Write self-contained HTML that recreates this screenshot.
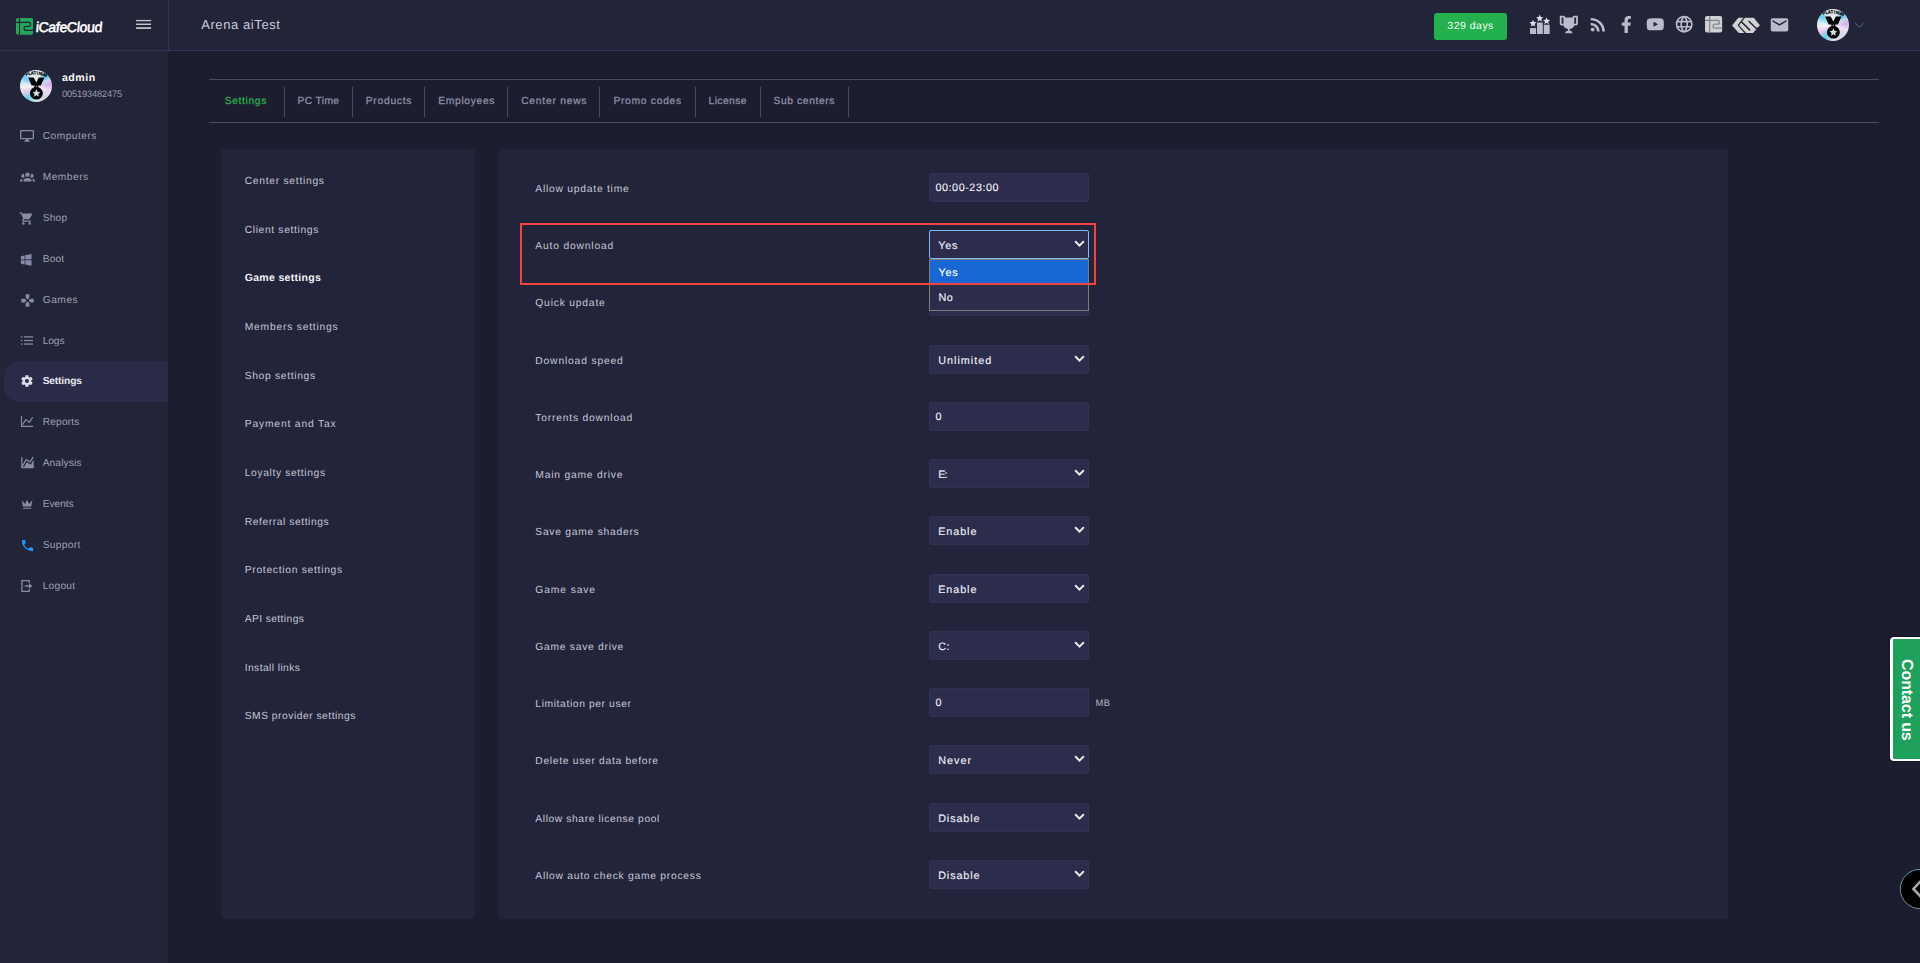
<!DOCTYPE html>
<html lang="en"><head><meta charset="utf-8"><title>iCafeCloud - Game settings</title>
<style>
*{box-sizing:border-box;margin:0;padding:0}
html,body{width:1920px;height:963px;overflow:hidden;background:#1c1d2f;font-family:"Liberation Sans",sans-serif}
.a{position:absolute;display:block}
.t{position:absolute;white-space:pre;display:block;text-rendering:geometricPrecision}
.inp{position:absolute;left:929px;width:160px;height:28.7px;background:#2c2d4c;border:1px solid #303253;border-radius:2px}
.chev{position:absolute;left:1074.4px;width:11px;height:8px}
.av{position:absolute;width:32.4px;height:32.4px;border-radius:50%;background:radial-gradient(circle at 50% 50%,rgba(255,255,255,.55) 0,rgba(255,255,255,0) 55%),conic-gradient(from 0deg,#e2e6ee 0deg,#dde4ec 22deg,#4fc9ef 47deg,#c9d6ea 64deg,#d3b0f0 84deg,#f1dcef 108deg,#d6dae6 135deg,#dbe0e8 178deg,#62d4ee 214deg,#e6c6ee 240deg,#f7eef2 264deg,#cfe6f0 284deg,#62cdee 306deg,#dde6ee 332deg,#e2e6ee 360deg)}
</style></head>
<body>
<div class="a" style="left:0px;top:0px;width:1920px;height:51px;background:#222437;border-bottom:1px solid #33355a"></div>
<div class="a" style="left:0px;top:51px;width:168px;height:912px;background:#222437;"></div>
<div class="a" style="left:168px;top:0px;width:1px;height:50px;background:#33355a;"></div>
<div class="a" style="left:4px;top:361px;width:164px;height:41.2px;background:#2a2c47;border-radius:15.5px 0 0 15.5px"></div>
<div class="a" style="left:209px;top:79px;width:1670px;height:1px;background:#4a4c62;"></div>
<div class="a" style="left:209px;top:122px;width:1670px;height:1px;background:#4a4c62;"></div>
<div class="a" style="left:284px;top:87px;width:1px;height:30px;background:#4a4c62;"></div>
<div class="a" style="left:352px;top:87px;width:1px;height:30px;background:#4a4c62;"></div>
<div class="a" style="left:424.4px;top:87px;width:1px;height:30px;background:#4a4c62;"></div>
<div class="a" style="left:507px;top:87px;width:1px;height:30px;background:#4a4c62;"></div>
<div class="a" style="left:599px;top:87px;width:1px;height:30px;background:#4a4c62;"></div>
<div class="a" style="left:695px;top:87px;width:1px;height:30px;background:#4a4c62;"></div>
<div class="a" style="left:760px;top:87px;width:1px;height:30px;background:#4a4c62;"></div>
<div class="a" style="left:848px;top:87px;width:1px;height:30px;background:#4a4c62;"></div>
<div class="a" style="left:221px;top:149px;width:254px;height:769.75px;background:#222439;border-radius:4px"></div>
<div class="a" style="left:499px;top:149px;width:1229px;height:769.75px;background:#222439;border-radius:4px 4px 0 0"></div>
<div class="inp" style="top:173px"></div>
<div class="inp" style="top:230px"></div>
<div class="inp" style="top:287px"></div>
<div class="inp" style="top:345px"></div>
<div class="inp" style="top:402px"></div>
<div class="inp" style="top:459px"></div>
<div class="inp" style="top:516px"></div>
<div class="inp" style="top:574px"></div>
<div class="inp" style="top:631px"></div>
<div class="inp" style="top:688px"></div>
<div class="inp" style="top:745px"></div>
<div class="inp" style="top:803px"></div>
<div class="inp" style="top:860px"></div>
<svg class="chev" style="top:240.40px" viewBox="0 0 11 8"><path d="M1.7 1.8L5.5 5.6L9.3 1.8" fill="none" stroke="#ececf0" stroke-width="2" stroke-linecap="round"/></svg>
<svg class="chev" style="top:297.40px" viewBox="0 0 11 8"><path d="M1.7 1.8L5.5 5.6L9.3 1.8" fill="none" stroke="#ececf0" stroke-width="2" stroke-linecap="round"/></svg>
<svg class="chev" style="top:355.40px" viewBox="0 0 11 8"><path d="M1.7 1.8L5.5 5.6L9.3 1.8" fill="none" stroke="#ececf0" stroke-width="2" stroke-linecap="round"/></svg>
<svg class="chev" style="top:469.40px" viewBox="0 0 11 8"><path d="M1.7 1.8L5.5 5.6L9.3 1.8" fill="none" stroke="#ececf0" stroke-width="2" stroke-linecap="round"/></svg>
<svg class="chev" style="top:526.40px" viewBox="0 0 11 8"><path d="M1.7 1.8L5.5 5.6L9.3 1.8" fill="none" stroke="#ececf0" stroke-width="2" stroke-linecap="round"/></svg>
<svg class="chev" style="top:584.40px" viewBox="0 0 11 8"><path d="M1.7 1.8L5.5 5.6L9.3 1.8" fill="none" stroke="#ececf0" stroke-width="2" stroke-linecap="round"/></svg>
<svg class="chev" style="top:641.40px" viewBox="0 0 11 8"><path d="M1.7 1.8L5.5 5.6L9.3 1.8" fill="none" stroke="#ececf0" stroke-width="2" stroke-linecap="round"/></svg>
<svg class="chev" style="top:755.40px" viewBox="0 0 11 8"><path d="M1.7 1.8L5.5 5.6L9.3 1.8" fill="none" stroke="#ececf0" stroke-width="2" stroke-linecap="round"/></svg>
<svg class="chev" style="top:813.40px" viewBox="0 0 11 8"><path d="M1.7 1.8L5.5 5.6L9.3 1.8" fill="none" stroke="#ececf0" stroke-width="2" stroke-linecap="round"/></svg>
<svg class="chev" style="top:870.40px" viewBox="0 0 11 8"><path d="M1.7 1.8L5.5 5.6L9.3 1.8" fill="none" stroke="#ececf0" stroke-width="2" stroke-linecap="round"/></svg>
<div class="a" style="left:929px;top:230.2px;width:160px;height:28.5px;border:1.3px solid #82b7fc;border-radius:2px"></div>
<div class="a" style="left:929px;top:259px;width:160px;height:51.5px;background:#2b2d4b;border:1px solid #7d7d78"></div>
<div class="a" style="left:930px;top:260px;width:158px;height:25px;background:#1967d4;"></div>
<div class="a" style="left:520px;top:223px;width:576.3px;height:62.2px;border:2.1px solid #f4433f"></div>
<svg class="a" style="left:16px;top:18.1px" width="17.2" height="16.8" viewBox="0 0 17.15 16.5" preserveAspectRatio="none"><rect x="0" y="0" width="17.15" height="16.5" rx="2" fill="#21a859"/><path d="M3.5 0V16.5" stroke="#222437" stroke-width="1.15" fill="none"/><path d="M0 4.3H12.6a1.95 1.95 0 0 1 0 3.9H10a2 2 0 0 0 0 4H17.15" stroke="#222437" stroke-width="1.15" fill="none"/></svg>
<svg class="a" style="left:136px;top:19px" width="16" height="11" viewBox="0 0 16 11"><g fill="#c6c6cc"><rect x="0.1" y="0.9" width="15" height="1.35"/><rect x="0.1" y="4.55" width="15" height="1.45"/><rect x="0.1" y="8.2" width="15" height="1.75"/></g></svg>
<div class="a" style="left:1434px;top:13px;width:73px;height:27px;background:#22b14c;border-radius:3px"></div>
<svg class="a" style="left:19.00px;top:129.00px" width="16" height="14" viewBox="0 0 16 14"><rect x="1.65" y="1.65" width="12.7" height="8" rx="0.6" fill="none" stroke="#878ba5" stroke-width="1.3"/><path d="M6.9 10.3H9.1L10.9 12.8H5.1Z" fill="#878ba5"/></svg>
<svg class="a" style="left:19.6px;top:169.35px" width="15" height="15" viewBox="0 0 24 24"><path fill="#878ba5" d="M12,5.5A3.5,3.5 0 0,1 15.5,9A3.5,3.5 0 0,1 12,12.5A3.5,3.5 0 0,1 8.5,9A3.5,3.5 0 0,1 12,5.5M5,8C5.56,8 6.08,8.15 6.53,8.42C6.38,9.85 6.8,11.27 7.66,12.38C7.16,13.34 6.16,14 5,14A3,3 0 0,1 2,11A3,3 0 0,1 5,8M19,8A3,3 0 0,1 22,11A3,3 0 0,1 19,14C17.84,14 16.84,13.34 16.34,12.38C17.2,11.27 17.62,9.85 17.47,8.42C17.92,8.15 18.44,8 19,8M5.5,18.25C5.5,16.18 8.41,14.5 12,14.5C15.59,14.5 18.5,16.18 18.5,18.25V20H5.5V18.25M0,20V18.5C0,17.11 1.89,15.94 4.45,15.6C3.86,16.28 3.5,17.22 3.5,18.25V20H0M24,20H20.5V18.25C20.5,17.22 20.14,16.28 19.55,15.6C22.11,15.94 24,17.11 24,18.5V20Z"/></svg>
<svg class="a" style="left:19.3px;top:210.5px" width="15" height="15" viewBox="0 0 24 24"><path fill="#878ba5" d="M17,18C15.89,18 15,18.89 15,20A2,2 0 0,0 17,22A2,2 0 0,0 19,20C19,18.89 18.1,18 17,18M1,2V4H3L6.6,11.59L5.24,14.04C5.09,14.32 5,14.65 5,15A2,2 0 0,0 7,17H19V15H7.42A0.25,0.25 0 0,1 7.17,14.75C7.17,14.7 7.18,14.66 7.2,14.63L8.1,13H15.55C16.3,13 16.96,12.58 17.3,11.97L20.88,5.5C20.95,5.34 21,5.17 21,5A1,1 0 0,0 20,4H5.21L4.27,2M7,18C5.89,18 5,18.89 5,20A2,2 0 0,0 7,22A2,2 0 0,0 9,20C9,18.89 8.1,18 7,18Z"/></svg>
<svg class="a" style="left:19.1px;top:251.5px" width="15" height="15" viewBox="0 0 24 24"><path fill="#878ba5" d="M3,12V6.75L9,5.43V11.91L3,12M20,3V11.75L10,11.9V5.21L20,3M3,13L9,13.09V19.9L3,18.75V13M20,13.25V22L10,20.09V13.1L20,13.25Z"/></svg>
<svg class="a" style="left:19.5px;top:292.65px" width="15" height="15" viewBox="0 0 24 24"><path fill="#878ba5" d="M16.5,9L13.5,12L16.5,15H22V9M9,16.5V22H15V16.5L12,13.5M7.5,9H2V15H7.5L10.5,12M15,7.5V2H9V7.5L12,10.5L15,7.5Z"/></svg>
<svg class="a" style="left:20.00px;top:335.20px" width="14" height="11" viewBox="0 0 14 11"><g fill="#878ba5"><rect x="0.9" y="1.25" width="1.6" height="1.3"/><rect x="4" y="1.25" width="9" height="1.3"/><rect x="0.9" y="4.85" width="1.6" height="1.3"/><rect x="4" y="4.85" width="9" height="1.3"/><rect x="0.9" y="8.4" width="1.6" height="1.3"/><rect x="4" y="8.4" width="9" height="1.3"/></g></svg>
<svg class="a" style="left:20px;top:374.04999999999995px" width="13.9" height="13.9" viewBox="0 0 24 24"><path fill="#dcdeea" d="M12,15.5A3.5,3.5 0 0,1 8.5,12A3.5,3.5 0 0,1 12,8.5A3.5,3.5 0 0,1 15.5,12A3.5,3.5 0 0,1 12,15.5M19.43,12.97C19.47,12.65 19.5,12.33 19.5,12C19.5,11.67 19.47,11.34 19.43,11L21.54,9.37C21.73,9.22 21.78,8.95 21.66,8.73L19.66,5.27C19.54,5.05 19.27,4.96 19.05,5.05L16.56,6.05C16.04,5.66 15.5,5.32 14.87,5.07L14.5,2.42C14.46,2.18 14.25,2 14,2H10C9.75,2 9.54,2.18 9.5,2.42L9.13,5.07C8.5,5.32 7.96,5.66 7.44,6.05L4.95,5.05C4.73,4.96 4.46,5.05 4.34,5.27L2.34,8.73C2.21,8.95 2.27,9.22 2.46,9.37L4.57,11C4.53,11.34 4.5,11.67 4.5,12C4.5,12.33 4.53,12.65 4.57,12.97L2.46,14.63C2.27,14.78 2.21,15.05 2.34,15.27L4.34,18.73C4.46,18.95 4.73,19.03 4.95,18.95L7.44,17.94C7.96,18.34 8.5,18.68 9.13,18.93L9.5,21.58C9.54,21.82 9.75,22 10,22H14C14.25,22 14.46,21.82 14.5,21.58L14.87,18.93C15.5,18.67 16.04,18.34 16.56,17.94L19.05,18.95C19.27,19.03 19.54,18.95 19.66,18.73L21.66,15.27C21.78,15.05 21.73,14.78 21.54,14.63L19.43,12.97Z"/></svg>
<svg class="a" style="left:20.00px;top:415.00px" width="14" height="13" viewBox="0 0 14 13"><g fill="none" stroke="#878ba5" stroke-width="1.2"><path d="M1.5 1V11.4H13.2"/><path d="M2.6 9.8L5.8 4.6L9.5 7.3L12.7 2"/></g></svg>
<svg class="a" style="left:19.5px;top:455.4px" width="15" height="15" viewBox="0 0 24 24"><path fill="#878ba5" d="M17.45,15.18L22,7.31V19L22,21H2V3H4V15.54L9.5,6L16,9.78L20.24,2.45L21.97,3.45L16.74,12.5L10.23,8.75L4.31,19H6.57L10.96,11.44L17.45,15.18Z"/></svg>
<svg class="a" style="left:19.8px;top:496.75px" width="14.2" height="14.2" viewBox="0 0 24 24"><path fill="#878ba5" d="M5,16L3,5L8.5,12L12,5L15.5,12L21,5L19,16H5M19,19A1,1 0 0,1 18,20H6A1,1 0 0,1 5,19V18H19V19Z"/></svg>
<svg class="a" style="left:19.55px;top:537.5px" width="15" height="15" viewBox="0 0 24 24"><path fill="#1e9bff" d="M6.62,10.79C8.06,13.62 10.38,15.94 13.21,17.38L15.41,15.18C15.69,14.9 16.08,14.82 16.43,14.93C17.55,15.3 18.75,15.5 20,15.5A1,1 0 0,1 21,16.5V20A1,1 0 0,1 20,21A17,17 0 0,1 3,4A1,1 0 0,1 4,3H7.5A1,1 0 0,1 8.5,4C8.5,5.25 8.7,6.45 9.07,7.57C9.18,7.92 9.1,8.31 8.82,8.59L6.62,10.79Z"/></svg>
<svg class="a" style="left:20.00px;top:579.10px" width="14" height="14" viewBox="0 0 14 14"><path d="M9.2 4V1.65H1.95V12.35H9.2V10" fill="none" stroke="#878ba5" stroke-width="1.3"/><path d="M4.8 6.3H9V4.2L12.4 7L9 9.8V7.7H4.8Z" fill="#878ba5"/></svg>
<svg class="a" style="left:1528px;top:14px" width="24" height="22" viewBox="0 0 24 22" fill="#b9bccb"><rect x="2" y="14.1" width="6.1" height="5.9"/><rect x="9" y="8.5" width="5.8" height="11.5"/><rect x="15.75" y="10.7" width="5.95" height="9.3"/><g fill="#dcdfea"><polygon points="5.00,5.70 6.03,8.08 8.61,8.33 6.66,10.04 7.23,12.57 5.00,11.25 2.77,12.57 3.34,10.04 1.39,8.33 3.97,8.08"/><polygon points="11.70,0.60 12.73,2.98 15.31,3.23 13.36,4.94 13.93,7.47 11.70,6.15 9.47,7.47 10.04,4.94 8.09,3.23 10.67,2.98"/><polygon points="18.60,3.30 19.63,5.68 22.21,5.93 20.26,7.64 20.83,10.17 18.60,8.85 16.37,10.17 16.94,7.64 14.99,5.93 17.57,5.68"/></g></svg>
<svg class="a" style="left:1558px;top:14.05px" width="21.7" height="21" preserveAspectRatio="none" viewBox="0 0 24 24"><path fill="#b9bccb" d="M20.2,2H19.5H18C17.1,2 16,3 16,4H8C8,3 6.9,2 6,2H4.5H3.8H2V11C2,12 3,13 4,13H6.2C6.6,15 7.9,16.7 11,17V19.1C8.8,19.3 8,20.4 8,21.7V22H16V21.7C16,20.4 15.2,19.3 13,19.1V17C16.1,16.7 17.4,15 17.8,13H20C21,13 22,12 22,11V2H20.2M4,11V4H6V6V11C5.1,11 4.3,11 4,11M20,11C19.7,11 18.9,11 18,11V6V4H20V11Z"/></svg>
<svg class="a" style="left:1587.15px;top:13.9px" width="21.9" height="21" preserveAspectRatio="none" viewBox="0 0 24 24"><path fill="#b9bccb" d="M6.18,15.64A2.18,2.18 0 0,1 8.36,17.82C8.36,19 7.38,20 6.18,20C5,20 4,19 4,17.82A2.18,2.18 0 0,1 6.18,15.64M4,4.44A15.56,15.56 0 0,1 19.56,20H16.73A12.73,12.73 0 0,0 4,7.27V4.44M4,10.1A9.9,9.9 0 0,1 13.9,20H11.07A7.07,7.07 0 0,0 4,12.93V10.1Z"/></svg>
<svg class="a" style="left:1621.1px;top:15.9px" width="10.75" height="17.2" viewBox="0 0 320 512"><path fill="#b9bccb" d="M279.14 288l14.22-92.66h-88.91v-60.13c0-25.35 12.42-50.06 52.24-50.06h40.42V6.26S260.43 0 225.36 0c-73.22 0-121.08 44.38-121.08 124.72v70.62H22.89V288h81.39v224h100.17V288z"/></svg>
<svg class="a" style="left:1645.1px;top:13.8px" width="20.6" height="20.6" viewBox="0 0 24 24"><path fill="#b9bccb" d="M10,15L15.19,12L10,9V15M21.56,7.17C21.69,7.64 21.78,8.27 21.84,9.07C21.91,9.87 21.94,10.56 21.94,11.16L22,12C22,14.19 21.84,15.8 21.56,16.83C21.31,17.73 20.73,18.31 19.83,18.56C19.36,18.69 18.5,18.78 17.18,18.84C15.88,18.91 14.69,18.94 13.59,18.94L12,19C7.81,19 5.2,18.84 4.17,18.56C3.27,18.31 2.69,17.73 2.44,16.83C2.31,16.36 2.22,15.73 2.16,14.93C2.09,14.13 2.06,13.44 2.06,12.84L2,12C2,9.81 2.16,8.2 2.44,7.17C2.69,6.27 3.27,5.69 4.17,5.44C4.64,5.31 5.5,5.22 6.82,5.16C8.12,5.09 9.31,5.06 10.41,5.06L12,5C16.19,5 18.8,5.16 19.83,5.44C20.73,5.69 21.31,6.27 21.56,7.17Z"/></svg>
<svg class="a" style="left:1674.3px;top:14.3px" width="20.4" height="20.4" viewBox="0 0 24 24"><path fill="#b9bccb" d="M16.36,14C16.44,13.34 16.5,12.68 16.5,12C16.5,11.32 16.44,10.66 16.36,10H19.74C19.9,10.64 20,11.31 20,12C20,12.69 19.9,13.36 19.74,14M14.59,19.56C15.19,18.45 15.65,17.25 15.97,16H18.92C17.96,17.65 16.43,18.93 14.59,19.56M14.34,14H9.66C9.56,13.34 9.5,12.68 9.5,12C9.5,11.32 9.56,10.65 9.66,10H14.34C14.43,10.65 14.5,11.32 14.5,12C14.5,12.68 14.43,13.34 14.34,14M12,19.96C11.17,18.76 10.5,17.43 10.09,16H13.91C13.5,17.43 12.83,18.76 12,19.96M8,8H5.08C6.03,6.34 7.57,5.06 9.4,4.44C8.8,5.55 8.35,6.75 8,8M5.08,16H8C8.35,17.25 8.8,18.45 9.4,19.56C7.57,18.93 6.03,17.65 5.08,16M4.26,14C4.1,13.36 4,12.69 4,12C4,11.31 4.1,10.64 4.26,10H7.64C7.56,10.66 7.5,11.32 7.5,12C7.5,12.68 7.56,13.34 7.64,14M12,4.03C12.83,5.23 13.5,6.57 13.91,8H10.09C10.5,6.57 11.17,5.23 12,4.03M18.92,8H15.97C15.65,6.75 15.19,5.55 14.59,4.44C16.43,5.07 17.96,6.34 18.92,8M12,2C6.47,2 2,6.5 2,12A10,10 0 0,0 12,22A10,10 0 0,0 22,12A10,10 0 0,0 12,2Z"/></svg>
<svg class="a" style="left:1705.4px;top:16.45px" width="17.15" height="16.5" viewBox="0 0 17.15 16.5" preserveAspectRatio="none"><rect x="0" y="0" width="17.15" height="16.5" rx="2" fill="#d0d0d2"/><path d="M4.7 0V16.5" stroke="#80828f" stroke-width="1.2" fill="none"/><path d="M0 4.3H12.6a1.95 1.95 0 0 1 0 3.9H10a2 2 0 0 0 0 4H17.15" stroke="#80828f" stroke-width="1.2" fill="none"/></svg>
<svg class="a" style="left:1728px;top:12px" width="36" height="26" viewBox="0 0 36 26"><polygon points="4.05,13.4 10.3,5.8 25.7,5.8 31.9,13.2 25,20.9 10.8,20.9" fill="#d3d3d5"/><g fill="none" stroke="#222437"><path d="M16.7 5.2L10.3 13.3L17.7 21.5" stroke-width="1.2"/><path d="M13.6 10L21.7 17.9" stroke-width="1.5" stroke-linecap="round"/><path d="M20.6 9L28.3 16.4L30.4 16" stroke-width="1.4"/></g></svg>
<svg class="a" style="left:1768.7px;top:14.5px" width="21" height="19.7" preserveAspectRatio="none" viewBox="0 0 24 24"><path fill="#b9bccb" d="M20,8L12,13L4,8V6L12,11L20,6M20,4H4C2.89,4 2,4.89 2,6V18A2,2 0 0,0 4,20H20A2,2 0 0,0 22,18V6C22,4.89 21.1,4 20,4Z"/></svg>
<svg class="a" style="left:1854px;top:21px" width="11" height="8" viewBox="0 0 11 8"><path d="M1.3 2.2L5.5 6.3L9.7 2.2" fill="none" stroke="#56679f" stroke-width="1"/></svg>
<div class="av" style="left:1816.8px;top:8.5px"></div><svg class="a" style="left:1816.8px;top:8.5px" width="32.4" height="32.4" viewBox="0 0 32 32"><defs><clipPath id="av1c"><circle cx="16" cy="16" r="16"/></clipPath></defs><path d="M8 7.3H13.5L16.1 12.3L18.6 7.3H24.1L20.6 15.2H11.5Z" fill="#000"/><rect x="14.2" y="14.4" width="3.9" height="3.4" rx="0.9" fill="#000"/><circle cx="16.1" cy="16.2" r="0.65" fill="#d8dce6"/><circle cx="16.2" cy="22.9" r="6.3" fill="#000"/><g fill="#d6dae4"><polygon points="16.20,19.10 17.35,21.52 20.00,21.86 18.05,23.70 18.55,26.34 16.20,25.05 13.85,26.34 14.35,23.70 12.40,21.86 15.05,21.52"/></g><g clip-path="url(#av1c)" opacity="0.995"><text x="6.60 9.29 11.97 14.66 17.34 20.03 22.71 25.40" y="6.02 5.25 4.74 4.48 4.48 4.74 5.25 6.02" rotate="-18.5 -13.4 -8.2 -2.7 2.7 8.2 13.4 18.5" text-anchor="middle" font-family="Liberation Sans, sans-serif" font-size="4.4" font-weight="700" fill="#000" stroke="#000" stroke-width="0.2" text-rendering="geometricPrecision" transform="translate(16 0) scale(0.92 1) translate(-16 0)">PLATINUM</text></g></svg>
<div class="av" style="left:19.9px;top:69.9px"></div><svg class="a" style="left:19.9px;top:69.9px" width="32.4" height="32.4" viewBox="0 0 32 32"><defs><clipPath id="av2c"><circle cx="16" cy="16" r="16"/></clipPath></defs><path d="M8 7.3H13.5L16.1 12.3L18.6 7.3H24.1L20.6 15.2H11.5Z" fill="#000"/><rect x="14.2" y="14.4" width="3.9" height="3.4" rx="0.9" fill="#000"/><circle cx="16.1" cy="16.2" r="0.65" fill="#d8dce6"/><circle cx="16.2" cy="22.9" r="6.3" fill="#000"/><g fill="#d6dae4"><polygon points="16.20,19.10 17.35,21.52 20.00,21.86 18.05,23.70 18.55,26.34 16.20,25.05 13.85,26.34 14.35,23.70 12.40,21.86 15.05,21.52"/></g><g clip-path="url(#av2c)" opacity="0.995"><text x="6.60 9.29 11.97 14.66 17.34 20.03 22.71 25.40" y="6.02 5.25 4.74 4.48 4.48 4.74 5.25 6.02" rotate="-18.5 -13.4 -8.2 -2.7 2.7 8.2 13.4 18.5" text-anchor="middle" font-family="Liberation Sans, sans-serif" font-size="4.4" font-weight="700" fill="#000" stroke="#000" stroke-width="0.2" text-rendering="geometricPrecision" transform="translate(16 0) scale(0.92 1) translate(-16 0)">PLATINUM</text></g></svg>
<div class="a" style="left:1890px;top:636.9px;width:40px;height:124px;background:#1ea15b;border:solid #fff;border-width:2.2px 0 2.2px 3px;border-radius:4px 0 0 4px;box-shadow:0 0 2px rgba(0,0,0,.9)"></div>
<div class="t" style="left:1897.2px;top:659px;width:18px;height:84px;writing-mode:vertical-rl;font-size:16px;font-weight:700;color:#fff;line-height:18px;letter-spacing:-0.1px">Contact us</div>
<svg class="a" style="left:1898px;top:867px" width="22" height="44" viewBox="0 0 22 44"><defs><linearGradient id="rg" x1="0" y1="0" x2="0.4" y2="1"><stop offset="0" stop-color="#3f9fc0"/><stop offset="0.5" stop-color="#6f8f98"/><stop offset="1" stop-color="#8a8a8a"/></linearGradient></defs><circle cx="22" cy="22" r="19.7" fill="#000" stroke="url(#rg)" stroke-width="1"/><path d="M23.5 13.3L15.4 21.9L23.5 30.5" fill="none" stroke="#a9a9a9" stroke-width="2.6"/></svg>
<span class="t" style="left:34.6px;top:16.70px;line-height:20px;font-size:14px;font-weight:400;color:#ffffff;letter-spacing:-0.30px;transform:skewX(-5deg);transform-origin:0 100%;-webkit-text-stroke:0.55px #fff;">iCafeCloud</span>
<span class="t" style="left:201.2px;top:16.10px;line-height:18px;font-size:13px;font-weight:400;color:#c9cbdb;letter-spacing:0.59px;">Arena aiTest</span>
<span class="t" style="left:1447.3px;top:19.10px;line-height:15px;font-size:10.4px;font-weight:400;color:#ffffff;letter-spacing:0.55px;">329 days</span>
<span class="t" style="left:61.9px;top:71.00px;line-height:15px;font-size:10.6px;font-weight:700;color:#ffffff;letter-spacing:0.55px;">admin</span>
<span class="t" style="left:61.9px;top:88.00px;line-height:13px;font-size:9.3px;font-weight:400;color:#9b9eb2;letter-spacing:-0.16px;">005193482475</span>
<span class="t" style="left:42.7px;top:130.10px;line-height:14px;font-size:10.2px;font-weight:400;color:#9da0b5;letter-spacing:0.48px;">Computers</span>
<span class="t" style="left:42.7px;top:171.10px;line-height:14px;font-size:10.2px;font-weight:400;color:#9da0b5;letter-spacing:0.51px;">Members</span>
<span class="t" style="left:42.7px;top:212.10px;line-height:14px;font-size:10.2px;font-weight:400;color:#9da0b5;letter-spacing:0.23px;">Shop</span>
<span class="t" style="left:42.7px;top:253.20px;line-height:14px;font-size:10.2px;font-weight:400;color:#9da0b5;letter-spacing:0.18px;">Boot</span>
<span class="t" style="left:42.7px;top:294.20px;line-height:14px;font-size:10.2px;font-weight:400;color:#9da0b5;letter-spacing:0.54px;">Games</span>
<span class="t" style="left:42.7px;top:335.20px;line-height:14px;font-size:10.2px;font-weight:400;color:#9da0b5;letter-spacing:-0.10px;">Logs</span>
<span class="t" style="left:42.7px;top:374.90px;line-height:14px;font-size:10.2px;font-weight:700;color:#e6e7f0;letter-spacing:-0.14px;">Settings</span>
<span class="t" style="left:42.7px;top:416.00px;line-height:14px;font-size:10.2px;font-weight:400;color:#9da0b5;letter-spacing:0.17px;">Reports</span>
<span class="t" style="left:42.7px;top:457.00px;line-height:14px;font-size:10.2px;font-weight:400;color:#9da0b5;letter-spacing:0.11px;">Analysis</span>
<span class="t" style="left:42.7px;top:498.00px;line-height:14px;font-size:10.2px;font-weight:400;color:#9da0b5;letter-spacing:-0.03px;">Events</span>
<span class="t" style="left:42.7px;top:539.10px;line-height:14px;font-size:10.2px;font-weight:400;color:#9da0b5;letter-spacing:0.32px;">Support</span>
<span class="t" style="left:42.7px;top:580.10px;line-height:14px;font-size:10.2px;font-weight:400;color:#9da0b5;letter-spacing:0.25px;">Logout</span>
<span class="t" style="left:224.7px;top:94.90px;line-height:14px;font-size:10.3px;font-weight:400;color:#2bb04a;letter-spacing:0.63px;-webkit-text-stroke:0.25px currentColor;">Settings</span>
<span class="t" style="left:297.5px;top:94.90px;line-height:14px;font-size:10.3px;font-weight:400;color:#8f92a8;letter-spacing:0.35px;-webkit-text-stroke:0.25px currentColor;">PC Time</span>
<span class="t" style="left:365.7px;top:94.90px;line-height:14px;font-size:10.3px;font-weight:400;color:#8f92a8;letter-spacing:0.74px;-webkit-text-stroke:0.25px currentColor;">Products</span>
<span class="t" style="left:438.3px;top:94.90px;line-height:14px;font-size:10.3px;font-weight:400;color:#8f92a8;letter-spacing:0.65px;-webkit-text-stroke:0.25px currentColor;">Employees</span>
<span class="t" style="left:521.2px;top:94.90px;line-height:14px;font-size:10.3px;font-weight:400;color:#8f92a8;letter-spacing:0.75px;-webkit-text-stroke:0.25px currentColor;">Center news</span>
<span class="t" style="left:613.4px;top:94.90px;line-height:14px;font-size:10.3px;font-weight:400;color:#8f92a8;letter-spacing:0.71px;-webkit-text-stroke:0.25px currentColor;">Promo codes</span>
<span class="t" style="left:708.5px;top:94.90px;line-height:14px;font-size:10.3px;font-weight:400;color:#8f92a8;letter-spacing:0.42px;-webkit-text-stroke:0.25px currentColor;">License</span>
<span class="t" style="left:773.5px;top:94.90px;line-height:14px;font-size:10.3px;font-weight:400;color:#8f92a8;letter-spacing:0.60px;-webkit-text-stroke:0.25px currentColor;">Sub centers</span>
<span class="t" style="left:244.7px;top:174.90px;line-height:14px;font-size:10.3px;font-weight:400;color:#c3c5d4;letter-spacing:0.72px;">Center settings</span>
<span class="t" style="left:244.7px;top:223.90px;line-height:14px;font-size:10.3px;font-weight:400;color:#c3c5d4;letter-spacing:0.64px;">Client settings</span>
<span class="t" style="left:244.7px;top:270.90px;line-height:15px;font-size:10.5px;font-weight:700;color:#f4f4f8;letter-spacing:0.32px;">Game settings</span>
<span class="t" style="left:244.7px;top:320.90px;line-height:14px;font-size:10.3px;font-weight:400;color:#c3c5d4;letter-spacing:0.78px;">Members settings</span>
<span class="t" style="left:244.7px;top:369.90px;line-height:14px;font-size:10.3px;font-weight:400;color:#c3c5d4;letter-spacing:0.67px;">Shop settings</span>
<span class="t" style="left:244.7px;top:417.90px;line-height:14px;font-size:10.3px;font-weight:400;color:#c3c5d4;letter-spacing:0.83px;">Payment and Tax</span>
<span class="t" style="left:244.7px;top:466.90px;line-height:14px;font-size:10.3px;font-weight:400;color:#c3c5d4;letter-spacing:0.63px;">Loyalty settings</span>
<span class="t" style="left:244.7px;top:515.90px;line-height:14px;font-size:10.3px;font-weight:400;color:#c3c5d4;letter-spacing:0.56px;">Referral settings</span>
<span class="t" style="left:244.7px;top:563.90px;line-height:14px;font-size:10.3px;font-weight:400;color:#c3c5d4;letter-spacing:0.71px;">Protection settings</span>
<span class="t" style="left:244.7px;top:612.90px;line-height:14px;font-size:10.3px;font-weight:400;color:#c3c5d4;letter-spacing:0.39px;">API settings</span>
<span class="t" style="left:244.7px;top:661.90px;line-height:14px;font-size:10.3px;font-weight:400;color:#c3c5d4;letter-spacing:0.41px;">Install links</span>
<span class="t" style="left:244.7px;top:709.90px;line-height:14px;font-size:10.3px;font-weight:400;color:#c3c5d4;letter-spacing:0.50px;">SMS provider settings</span>
<span class="t" style="left:535.3px;top:183.00px;line-height:14px;font-size:10.3px;font-weight:400;color:#c6c8d6;letter-spacing:0.76px;">Allow update time</span>
<span class="t" style="left:535.3px;top:240.00px;line-height:14px;font-size:10.3px;font-weight:400;color:#c6c8d6;letter-spacing:0.82px;">Auto download</span>
<span class="t" style="left:535.3px;top:297.00px;line-height:14px;font-size:10.3px;font-weight:400;color:#c6c8d6;letter-spacing:0.80px;">Quick update</span>
<span class="t" style="left:535.3px;top:355.00px;line-height:14px;font-size:10.3px;font-weight:400;color:#c6c8d6;letter-spacing:0.83px;">Download speed</span>
<span class="t" style="left:535.3px;top:412.00px;line-height:14px;font-size:10.3px;font-weight:400;color:#c6c8d6;letter-spacing:0.80px;">Torrents download</span>
<span class="t" style="left:535.3px;top:469.00px;line-height:14px;font-size:10.3px;font-weight:400;color:#c6c8d6;letter-spacing:0.79px;">Main game drive</span>
<span class="t" style="left:535.3px;top:526.00px;line-height:14px;font-size:10.3px;font-weight:400;color:#c6c8d6;letter-spacing:0.74px;">Save game shaders</span>
<span class="t" style="left:535.3px;top:584.00px;line-height:14px;font-size:10.3px;font-weight:400;color:#c6c8d6;letter-spacing:0.89px;">Game save</span>
<span class="t" style="left:535.3px;top:641.00px;line-height:14px;font-size:10.3px;font-weight:400;color:#c6c8d6;letter-spacing:0.73px;">Game save drive</span>
<span class="t" style="left:535.3px;top:698.00px;line-height:14px;font-size:10.3px;font-weight:400;color:#c6c8d6;letter-spacing:0.61px;">Limitation per user</span>
<span class="t" style="left:535.3px;top:755.00px;line-height:14px;font-size:10.3px;font-weight:400;color:#c6c8d6;letter-spacing:0.69px;">Delete user data before</span>
<span class="t" style="left:535.3px;top:813.00px;line-height:14px;font-size:10.3px;font-weight:400;color:#c6c8d6;letter-spacing:0.59px;">Allow share license pool</span>
<span class="t" style="left:535.3px;top:870.00px;line-height:14px;font-size:10.3px;font-weight:400;color:#c6c8d6;letter-spacing:0.74px;">Allow auto check game process</span>
<span class="t" style="left:935.4px;top:181.00px;line-height:15px;font-size:10.8px;font-weight:400;color:#f2f2f8;letter-spacing:0.56px;-webkit-text-stroke:0.12px currentColor;">00:00-23:00</span>
<span class="t" style="left:938.2px;top:238.70px;line-height:15px;font-size:10.8px;font-weight:400;color:#f2f2f8;letter-spacing:0.79px;-webkit-text-stroke:0.12px currentColor;">Yes</span>
<span class="t" style="left:938.2px;top:353.70px;line-height:15px;font-size:10.8px;font-weight:400;color:#f2f2f8;letter-spacing:1.00px;-webkit-text-stroke:0.12px currentColor;">Unlimited</span>
<span class="t" style="left:935.4px;top:410.00px;line-height:15px;font-size:10.8px;font-weight:400;color:#f2f2f8;letter-spacing:0.58px;-webkit-text-stroke:0.12px currentColor;">0</span>
<span class="t" style="left:938.2px;top:467.70px;line-height:15px;font-size:10.8px;font-weight:400;color:#f2f2f8;letter-spacing:-0.90px;-webkit-text-stroke:0.12px currentColor;">E:</span>
<span class="t" style="left:938.2px;top:524.70px;line-height:15px;font-size:10.8px;font-weight:400;color:#f2f2f8;letter-spacing:0.93px;-webkit-text-stroke:0.12px currentColor;">Enable</span>
<span class="t" style="left:938.2px;top:582.70px;line-height:15px;font-size:10.8px;font-weight:400;color:#f2f2f8;letter-spacing:0.93px;-webkit-text-stroke:0.12px currentColor;">Enable</span>
<span class="t" style="left:938.2px;top:639.70px;line-height:15px;font-size:10.8px;font-weight:400;color:#f2f2f8;letter-spacing:0.49px;-webkit-text-stroke:0.12px currentColor;">C:</span>
<span class="t" style="left:935.4px;top:696.00px;line-height:15px;font-size:10.8px;font-weight:400;color:#f2f2f8;letter-spacing:0.58px;-webkit-text-stroke:0.12px currentColor;">0</span>
<span class="t" style="left:938.2px;top:753.70px;line-height:15px;font-size:10.8px;font-weight:400;color:#f2f2f8;letter-spacing:1.05px;-webkit-text-stroke:0.12px currentColor;">Never</span>
<span class="t" style="left:938.2px;top:811.70px;line-height:15px;font-size:10.8px;font-weight:400;color:#f2f2f8;letter-spacing:0.88px;-webkit-text-stroke:0.12px currentColor;">Disable</span>
<span class="t" style="left:938.2px;top:868.70px;line-height:15px;font-size:10.8px;font-weight:400;color:#f2f2f8;letter-spacing:0.88px;-webkit-text-stroke:0.12px currentColor;">Disable</span>
<span class="t" style="left:938.4px;top:265.90px;line-height:15px;font-size:10.8px;font-weight:400;color:#ffffff;letter-spacing:0.79px;-webkit-text-stroke:0.12px currentColor;">Yes</span>
<span class="t" style="left:938.4px;top:291.00px;line-height:15px;font-size:10.8px;font-weight:400;color:#f2f2f8;letter-spacing:0.49px;-webkit-text-stroke:0.12px currentColor;">No</span>
<span class="t" style="left:1095.4px;top:696.20px;line-height:13px;font-size:9.4px;font-weight:400;color:#b4b6c8;letter-spacing:0.54px;">MB</span>
</body></html>
